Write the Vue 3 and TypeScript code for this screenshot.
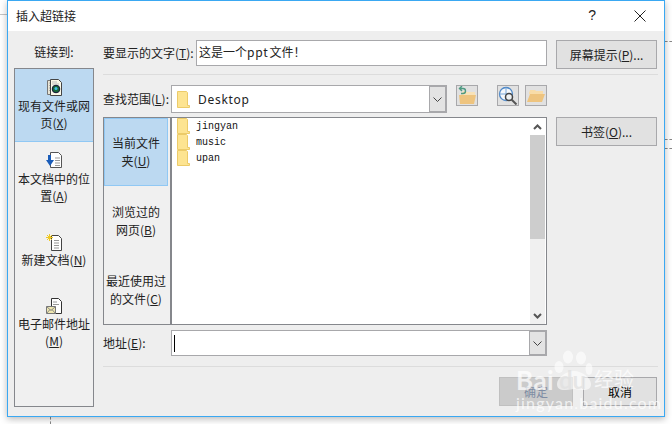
<script setup lang="ts">
interface Link { icon: string; label: string; key: string; active?: boolean }
const links: Link[] = [
  { icon: 'file', label: '现有文件或网页', key: 'X', active: true },
  { icon: 'place', label: '本文档中的位置', key: 'A' },
  { icon: 'new', label: '新建文档', key: 'N' },
  { icon: 'mail', label: '电子邮件地址', key: 'M' },
]
const tabs = [
  { label: '当前文件夹', key: 'U', active: true },
  { label: '浏览过的网页', key: 'B' },
  { label: '最近使用过的文件', key: 'C' },
]
const folders = ['jingyan', 'music', 'upan']
</script>

<template>
  <div class="screen">
    <i class="bg-line"></i>
    <i class="bg-dash d1"></i>
    <i class="bg-dash d2"></i>
    <i class="bg-dash d3"></i>
    <i class="bg-vdash"></i>
    <div class="dialog">
      <header class="title">
        <span class="title-text">插入超链接</span>
        <span class="help">?</span>
        <svg class="close" width="12" height="12" viewBox="0 0 12 12"><path d="M.5.5l11 11M11.5.5l-11 11" stroke="#222" fill="none" /></svg>
      </header>
      <div class="body">
        <aside class="side">
          <div class="side-label">链接到:</div>
          <div class="side-box">
            <div v-for="l in links" :key="l.key" class="link" :class="{ active: l.active }">
              <svg class="link-icon" width="17" height="17" viewBox="0 0 17 17">
                <template v-if="l.icon === 'file'">
                  <path d="M1.500 1.500h7v14h-7z" fill="#e8e4d4" stroke="#777" />
                  <path d="M3 4h3M3 6.500h3M3 9h2M3 11.500h2" stroke="#aaa" />
                  <path d="M4.500 .5h8l3 3v13h-11z" fill="#fbf8e8" stroke="#444" />
                  <path d="M6 3h5M6 5h7" stroke="#bbb" />
                  <circle cx="10" cy="10" r="3.800" fill="#18683a" stroke="#113" />
                  <circle cx="10" cy="9.500" r="1.500" fill="#3fc0e8" />
                </template>
                <template v-else-if="l.icon === 'place'">
                  <path d="M4.500 .5h8l3 3v12h-11z" fill="#fff" stroke="#555" />
                  <path d="M9 6h5M9 8.500h5M9 11h5M9 13.500h5" stroke="#999" />
                  <path d="M5 3v5h3l-4 6L0 8h2V3z" fill="#1a5cb8" />
                </template>
                <template v-else-if="l.icon === 'new'">
                  <path d="M5.500 1.500h7l3 3v12h-10z" fill="#fff" stroke="#444" />
                  <path d="M8 6.500h5M8 9h5M8 11.500h5M8 14h5" stroke="#999" />
                  <path d="M3.500 0v7M0 3.500h7M1 1l5 5M6 1L1 6" stroke="#f0c820" />
                </template>
                <template v-else>
                  <path d="M5.500 .5h7l3 3v12h-10z" fill="#fff" stroke="#333" />
                  <path d="M7 4h4M7 6.500h6" stroke="#999" />
                  <path d="M.5 8.500h9v7h-9z" fill="#f0e8b0" stroke="#777" />
                  <path d="M.5 8.500l4.500 4 4.500-4M.5 15.500l3.500-4M9.500 15.500l-3.500-4" stroke="#888" fill="none" />
                </template>
              </svg>
              <div class="link-text">{{ l.label }}(<u>{{ l.key }}</u>)</div>
            </div>
          </div>
        </aside>

        <main class="main">
          <div class="row first">
            <label class="label">要显示的文字(<u>T</u>):</label>
            <div class="field text-field">这是一个<span class="latin">ppt</span>文件！</div>
            <button class="btn wide">屏幕提示(<u>P</u>)...</button>
          </div>
          <hr class="sep sep-top" />
          <div class="row look">
            <label class="label look-label">查找范围(<u>L</u>):</label>
            <div class="field combo">
              <svg class="folder" width="13" height="17" viewBox="0 0 13 17"><path d="M.5.5h9l1 1v13h2v2H.5z" fill="#fde491" stroke="#eccb69" /></svg>
              <span class="combo-value">Desktop</span>
              <span class="drop"><svg width="9" height="5" viewBox="0 0 9 5"><path d="M.5.500l4 4 4-4" fill="none" stroke="#444" /></svg></span>
            </div>
            <div class="tools">
              <span class="tool">
                <svg width="20" height="19" viewBox="0 0 20 19">
                  <path d="M4 8l2-3h3l1 1h8v4H4z" fill="#f8e2b8" />
                  <path d="M2 9h17l-2 9H3z" fill="#eec47f" />
                  <path d="M5 0L2.500 2.500 5 5M3 2.500h3a2.500 2.500 0 0 1 0 5H4" fill="none" stroke="#4e9a82" stroke-width="1.400" />
                </svg>
              </span>
              <span class="tool tool-gap">
                <svg width="20" height="19" viewBox="0 0 20 19">
                  <circle cx="8" cy="8" r="6.500" fill="#f4f7fb" stroke="#4c86c6" stroke-width="1.300" />
                  <path d="M8 1.500v13M1.500 8h13" stroke="#7aa8d8" />
                  <circle cx="11" cy="11" r="3.500" fill="#eef2f5" stroke="#444" stroke-width="1.500" />
                  <path d="M13.500 13.500l5 5" stroke="#555" stroke-width="2" />
                </svg>
              </span>
              <span class="tool">
                <svg width="20" height="19" viewBox="0 0 20 19">
                  <path d="M3 7l1-3h5l1 1h7v3H3z" fill="#f8dca8" />
                  <path d="M4 8h15l-3 8H1z" fill="#eec47f" />
                </svg>
              </span>
            </div>
          </div>
          <div class="row browser-row">
            <div class="browser">
              <div class="tabs">
                <div v-for="t in tabs" :key="t.key" class="tab" :class="{ active: t.active }">{{ t.label }}(<u>{{ t.key }}</u>)</div>
              </div>
              <div class="list">
                <div class="files">
                  <div v-for="f in folders" :key="f" class="file">
                    <svg width="13" height="16" viewBox="0 0 13 16"><path d="M.5.500h9l1 1v12h2v2H.5z" fill="#fde491" stroke="#eccb69" /></svg>
                    <span>{{ f }}</span>
                  </div>
                </div>
                <div class="scroll">
                  <span class="arrow"><svg width="9" height="6" viewBox="0 0 9 6"><path d="M1 5l3.500-3.500L8 5" fill="none" stroke="#555" stroke-width="2" /></svg></span>
                  <span class="thumb"></span>
                  <span class="arrow end"><svg width="9" height="6" viewBox="0 0 9 6"><path d="M1 1l3.500 3.500L8 1" fill="none" stroke="#555" stroke-width="2" /></svg></span>
                </div>
              </div>
            </div>
            <button class="btn wide">书签(<u>O</u>)...</button>
          </div>
          <div class="row addr">
            <label class="label look-label">地址(<u>E</u>):</label>
            <div class="field combo addr-combo">
              <i class="caret"></i>
              <span class="drop"><svg width="9" height="5" viewBox="0 0 9 5"><path d="M.5.500l4 4 4-4" fill="none" stroke="#444" /></svg></span>
            </div>
          </div>
          <hr class="sep sep-bottom" />
          <div class="actions">
            <button class="btn ok">确定</button>
            <button class="btn cancel">取消</button>
          </div>
        </main>
      </div>
    </div>
    <div class="mark">
      <svg class="paw" width="40" height="44" viewBox="0 0 40 44">
        <ellipse cx="5" cy="17" rx="4.500" ry="6" />
        <ellipse cx="14" cy="7" rx="5" ry="6.500" />
        <ellipse cx="27" cy="8" rx="5" ry="6.500" />
        <ellipse cx="35" cy="19" rx="3.500" ry="6" />
        <path d="M3 34c0-6 9-13 17-13s17 7 17 13c0 6-5 6-9 6-3 0-5-1-8-1s-5 1-8 1c-4 0-9 0-9-6z" />
      </svg>
      <span class="mark-bai">Bai</span>
      <span class="mark-du">du</span>
      <span class="mark-cn">经验</span>
      <span class="mark-url">jingyan.baidu.com</span>
    </div>
  </div>
</template>

<style scoped>
.screen {
  position: relative;
  width: 672px;
  height: 424px;
  overflow: hidden;
  background: #fff;
  font-family: "Noto Sans CJK SC", "Noto Sans", sans-serif;
  font-size: 12px;
  color: #222;
}
.bg-line { position: absolute; left: 0; top: 14px; width: 8px; height: 1px; background: #c4c4c4; }
.bg-dash { position: absolute; left: 665px; width: 7px; border-top: 1px dashed #888; }
.d1 { top: 41px; }
.d2 { top: 139px; }
.d3 { top: 148px; }
.bg-vdash { position: absolute; left: 50px; top: 417px; height: 7px; border-left: 1px dashed #888; }
.dialog {
  position: relative;
  box-sizing: border-box;
  margin-left: 7px;
  width: 658px;
  height: 417px;
  border: 1px solid #3aa8f2;
  background: #eeeeee;
  display: flex;
  flex-direction: column;
  box-shadow: 0 2px 7px rgba(0, 0, 0, .28);
}
.title {
  height: 30px;
  background: #fff;
  display: flex;
  align-items: center;
  padding: 0 18px 0 8px;
  flex: none;
}
.title-text { font-size: 12px; flex: 1; margin-top: -1px; }
.help { font-size: 14px; margin-right: 38px; margin-top: -2px; font-family: "Liberation Sans", sans-serif; }
.close { margin-top: -1px; }
.body { flex: 1; display: flex; padding: 9px 6px 9px 6px; gap: 9px; min-height: 0; }
.side { width: 80px; flex: none; display: flex; flex-direction: column; }
.side-label { height: 28px; line-height: 24px; text-align: center; }
.side-box { flex: 1; border: 1px solid #85878c; background: #f0f0f0; }
.link { box-sizing: border-box; padding-top: 10px; text-align: center; display: flex; flex-direction: column; align-items: center; }
.link:nth-child(1) { height: 73px; }
.link:nth-child(2) { height: 82px; }
.link:nth-child(3) { height: 64px; }
.link-icon { display: block; flex: none; }
.link-text { width: 73px; line-height: 17px; margin-top: 1px; }
.link:nth-child(n+3) .link-text { margin-top: 0; }
.link.active { background: #bcd9f1; border-bottom: 1px solid #90c8f4; }
.main { flex: 1; display: flex; flex-direction: column; min-width: 0; }
.row { display: flex; align-items: flex-start; }
.first { height: 29px; }
.label { width: 93px; flex: none; line-height: 26px; white-space: nowrap; }
.look-label { width: 68px; line-height: 28px; }
.field { box-sizing: border-box; background: #fff; border: 1px solid #a8a8ab; }
.text-field { width: 351px; height: 26px; line-height: 22px; padding-left: 2px; }
.latin { letter-spacing: .8px; margin-right: 1px; }
.btn {
  box-sizing: border-box;
  height: 29px;
  width: 101px;
  padding: 0;
  border: 1px solid #a8a8ab;
  background: #e1e1e1;
  font: inherit;
  color: #222;
}
.wide { margin-left: 9px; }
.sep { border: 0; height: 1px; background: #dcdcdc; margin: 0; flex: none; }
.sep-top { margin-top: 5px; }
.look { margin-top: 10px; height: 32px; }
.combo { position: relative; height: 28px; width: 276px; display: flex; align-items: center; padding-left: 5px; }
.combo-value { margin-left: 8px; letter-spacing: .7px; color: #222; font-family: "Noto Sans", sans-serif; }
.drop {
  position: absolute;
  right: -1px;
  top: -1px;
  bottom: -1px;
  width: 18px;
  box-sizing: border-box;
  background: #e3e3e3;
  border: 2px solid #a8a8ab;
  border-left-width: 1px;
  display: flex;
  align-items: center;
  justify-content: center;
}
.tools { display: flex; margin-left: 9px; }
.tool {
  box-sizing: border-box;
  width: 22px;
  height: 21px;
  border: 1px solid #a8a8ab;
  background: #e1e1e1;
  display: flex;
  align-items: center;
  justify-content: center;
  margin-right: 19px;
}
.tool svg { flex: none; }
.tool-gap { margin-right: 6px; }
.browser-row { height: 208px; }
.browser { width: 444px; height: 208px; flex: none; display: flex; box-sizing: border-box; border: solid #85878c; border-width: 1px 0 1px 1px; }
.tabs { width: 66px; flex: none; background: #f0f0f0; border-right: 2px solid #85878c; }
.tab {
  box-sizing: border-box;
  width: 64px;
  height: 69px;
  padding: 16px 6px 0;
  text-align: center;
  line-height: 18px;
}
.tab:last-child { padding: 16px 0 0; }
.tab.active { height: 68px; background: #bcd9f1; border: 1px solid #90c8f4; padding-top: 15px; margin-bottom: 1px; }
.list { flex: 1; display: flex; background: #fff; border-right: 1px solid #85878c; min-width: 0; }
.files { flex: 1; padding: 0 0 0 5px; }
.file { height: 16px; display: flex; align-items: center; font-family: "Liberation Mono", monospace; font-size: 10px; color: #111; }
.file span { margin-left: 6px; }
.file svg { flex: none; }
.scroll { width: 15px; margin-right: 1px; background: #f0f0f0; display: flex; flex-direction: column; }
.arrow { height: 17px; display: flex; align-items: center; justify-content: center; flex: none; background: #fff; }
.arrow.end { margin-top: auto; background: #f0f0f0; }
.thumb { height: 104px; background: #cdcdcd; flex: none; }
.addr { margin-top: 5px; height: 26px; }
.addr .look-label { line-height: 26px; }
.addr-combo { width: 376px; height: 26px; padding-left: 2px; }
.caret { display: block; width: 1px; height: 17px; background: #000; }
.sep-bottom { margin-top: 10px; }
.actions { margin-top: 10px; display: flex; justify-content: flex-end; gap: 10px; padding-right: 1px; }
.ok { width: 74px; background: #cbcbcb; border-color: #c0c0c0; color: #7f8da4; }
.cancel { width: 74px; color: #000; }
.mark { position: absolute; left: 510px; top: 350px; width: 150px; height: 70px; color: rgba(255, 255, 255, .72); pointer-events: none; }
.paw { position: absolute; left: 44px; top: 0; fill: rgba(255, 255, 255, .6); }
.mark-bai { position: absolute; left: 6px; top: 14px; font: 700 26px/32px "Lato", sans-serif; letter-spacing: .5px; }
.mark-du { position: absolute; left: 49px; top: 14px; font: 700 24px/32px "Lato", sans-serif; color: rgba(225, 225, 225, .8); }
.mark-cn { position: absolute; left: 84px; top: 17px; font: 400 20px/24px "Noto Sans CJK SC", sans-serif; }
.mark-url { position: absolute; left: 6px; top: 43px; font: 400 16px/20px "Lato", sans-serif; letter-spacing: 1.2px; }
</style>
